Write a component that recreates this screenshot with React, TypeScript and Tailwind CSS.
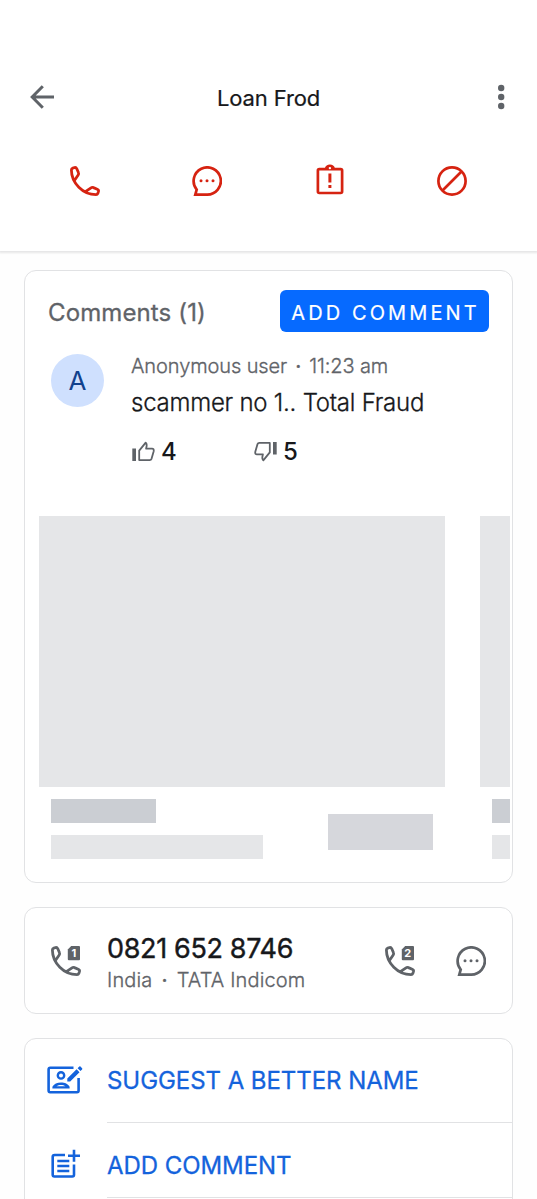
import type { ReactNode } from "react";

function PhoneIcon({ sim }: { sim?: string }) {
  return (
    <svg width="30" height="30" viewBox="0 0 30 30" className="block shrink-0 overflow-visible" fill="none" stroke="currentColor" strokeWidth="2.8" strokeLinejoin="round">
      <path d="M4.6 14.2L8.2 9Q9 7.8 8.4 6.5L6.8 2.8Q6 1.1 4.6 1.5L2.8 2.1Q1.4 2.6 1.4 4C1.4 17 13 28.6 26 28.6Q27.4 28.6 27.9 27.2L28.5 25.4Q28.9 24 27.2 23.2L23.5 21.6Q22.2 21 21 21.8L15.8 25.4" />
      {sim && (
        <>
          <path d="M20.2 0H28Q29 0 29 1V13.3Q29 14.3 28 14.3H17.8Q16.8 14.3 16.8 13.3V3.6Z" fill="currentColor" stroke="none" />
          <text x="22.8" y="11.4" textAnchor="middle" fontSize="11" className="fill-white font-bold" stroke="none">{sim}</text>
        </>
      )}
    </svg>
  );
}

function BubbleIcon() {
  return (
    <svg width="30" height="30" viewBox="0 0 30 30" className="block shrink-0" fill="none" stroke="currentColor" strokeWidth="2.7">
      <path d="M15 28.6H3.3L4.7 23.6A13.6 13.6 0 1 1 15 28.6Z" />
      <g fill="currentColor" stroke="none">
        <circle cx="9" cy="14.8" r="1.5" />
        <circle cx="15" cy="14.8" r="1.5" />
        <circle cx="21" cy="14.8" r="1.5" />
      </g>
    </svg>
  );
}

function ReportIcon() {
  return (
    <svg width="30" height="30" viewBox="0 0 30 30" className="block shrink-0 overflow-visible" fill="none" stroke="currentColor" strokeWidth="2.7">
      <rect x="2.9" y="3.1" width="24.2" height="23.9" rx="1.4" />
      <path d="M10.8 2.6A4.2 4.2 0 0 1 19 2.6Z" fill="currentColor" stroke="none" />
      <path d="M10.8 2.6A4.3 4.3 0 0 1 19 2.6" strokeWidth="2" />
      <circle cx="14.9" cy="2.1" r="1.2" fill="white" stroke="none" />
      <path d="M14.9 7.6V16.6M14.9 19V22" strokeWidth="3" />
    </svg>
  );
}

function BlockIcon() {
  return (
    <svg width="30" height="30" viewBox="0 0 30 30" className="block shrink-0" fill="none" stroke="currentColor" strokeWidth="2.7">
      <circle cx="15" cy="15" r="13.6" />
      <path d="M5.5 24.5L24.5 5.5" />
    </svg>
  );
}

function ThumbIcon({ down = false }: { down?: boolean }) {
  return (
    <svg width="23" height="21" viewBox="0 0 23 21" className={down ? "block shrink-0 rotate-180" : "block shrink-0"} fill="none" stroke="currentColor" strokeWidth="1.8" strokeLinejoin="round">
      <path d="M0.3 7.6H4V20H0.3Z" fill="currentColor" stroke="none" />
      <path d="M7.2 19.1V9.6L13.7 1.6Q15 3 14.7 4.8L14.1 7.6H20Q22.2 7.6 21.7 10.2L19.6 17.6Q19.1 19.1 17.6 19.1Z" />
    </svg>
  );
}

function SuggestIcon() {
  return (
    <svg width="36" height="28" viewBox="0 0 36 28" className="block shrink-0" fill="none" stroke="currentColor" strokeWidth="2.6">
      <path d="M26.5 1.8H3.2Q1.6 1.8 1.6 3.4V24.6Q1.6 26.2 3.2 26.2H30Q31.6 26.2 31.6 24.6V12" />
      <circle cx="14" cy="9.4" r="3.2" strokeWidth="2.4" />
      <path d="M5.4 22.6V20.8C8 15 20 15 22.6 20.8V22.6ZM9.5 20.3H18.5C16 18.5 12 18.5 9.5 20.3Z" fill="currentColor" fillRule="evenodd" stroke="none" />
      <path d="M20.3 12.6L29.6 3.3L32.5 6.2L23.2 15.5H20.3ZM30.6 2.3L32.3.6Q32.9.1 33.5.6L35.1 2.2Q35.6 2.8 35.1 3.4L33.5 5.1Z" fill="currentColor" stroke="none" />
    </svg>
  );
}

function PostAddIcon() {
  return (
    <svg width="30" height="30" viewBox="0 0 30 30" className="block shrink-0" fill="none" stroke="currentColor" strokeWidth="2.6">
      <path d="M14 6H3.6Q1.7 6 1.7 7.7V25.8Q1.7 27.5 3.4 27.5H21.3Q23 27.5 23 25.8V15.5" />
      <path d="M23 0.7V12.8M17 6.7H29" />
      <path d="M6.3 12H18.3M6.3 17H18.3M6.3 22H18.3" strokeWidth="2.4" />
    </svg>
  );
}

function Card({ className, children }: { className: string; children: ReactNode }) {
  return <section className={`mx-6 overflow-hidden rounded-xl border border-[#e1e2e4] bg-white ${className}`}>{children}</section>;
}

function Dot({ className }: { className: string }) {
  return <span className={`font-medium ${className}`}>·</span>;
}

function SkeletonItem() {
  return (
    <div className="w-[406px] shrink-0">
      <div className="h-[271px] bg-[#e5e6e8]" />
      <div className="flex items-start justify-between px-3 pt-3">
        <div>
          <div className="h-6 w-[105px] bg-[#cbced3]" />
          <div className="mt-3 h-6 w-[212px] bg-[#e5e6e8]" />
        </div>
        <div className="mt-[15px] h-9 w-[105px] bg-[#d6d7dc]" />
      </div>
    </div>
  );
}

export default function App() {
  return (
    <main className="h-[1199px] overflow-hidden bg-[#fefefe] font-['Inter','Liberation_Sans',sans-serif] whitespace-nowrap text-[#17181b]">
      <header className="h-[251px] bg-white pt-[75px] shadow-[0_1px_2px_1px_#e6e6e7]">
        <div className="flex h-11 items-center justify-between pr-8 pl-[30px]">
          <div className="w-10">
            <svg width="24" height="24" viewBox="0 0 24 24" fill="none" stroke="#5f6368" strokeWidth="3">
              <path d="M12.8 1.2L2.2 12L12.8 22.8M2.2 12H24" />
            </svg>
          </div>
          <h1 className="pt-0.5 pl-0.5 text-[22px] leading-7 tracking-[-0.12px] [-webkit-text-stroke:0.2px]">Loan Frod</h1>
          <div className="flex w-10 justify-end">
            <svg width="8" height="26" viewBox="0 0 8 26" fill="#5f6368">
              <circle cx="4.2" cy="4" r="3.2" />
              <circle cx="4.2" cy="13" r="3.2" />
              <circle cx="4.2" cy="22" r="3.2" />
            </svg>
          </div>
        </div>
        <nav className="mt-[47px] flex justify-between px-[70px] text-[#d62311]">
          <PhoneIcon />
          <BubbleIcon />
          <ReportIcon />
          <BlockIcon />
        </nav>
      </header>

      <Card className="mt-[19px] h-[613px]">
        <div className="mt-[19px] flex h-[42px] items-center justify-between px-[23px]">
          <h2 className="pt-[3px] text-[24px] tracking-[0.12px] text-[#5f6368] [-webkit-text-stroke:0.3px]">Comments (1)</h2>
          <button className="h-[42px] w-[209px] rounded-md bg-[#066aff] pt-[3px] pl-0.5 text-[20px] tracking-[3.1px] text-white [-webkit-text-stroke:0.2px]">ADD COMMENT</button>
        </div>
        <div className="mt-[22px] flex pl-[26px]">
          <div className="flex size-[53px] items-center justify-center rounded-full bg-[#cfe0fe] text-[26px] text-[#11418d]">A</div>
          <div className="ml-[27px]">
            <p className="text-[20px] leading-6 font-light tracking-[-0.1px] text-[#5f6368] [-webkit-text-stroke:0.3px]">Anonymous user<Dot className="mx-2" />11:23 am</p>
            <p className="mt-[9px] text-[24px] leading-8 font-light tracking-[-0.24px] [-webkit-text-stroke:0.3px]">scammer no 1.. Total Fraud</p>
            <div className="mt-[17px] ml-px flex h-8 items-center text-[24px] font-medium">
              <span className="-mt-0.5 text-[#5f6368]"><ThumbIcon /></span>
              <span className="ml-1.5 w-[93px]">4</span>
              <span className="-mt-0.5 text-[#5f6368]"><ThumbIcon down /></span>
              <span className="ml-1.5">5</span>
            </div>
          </div>
        </div>
        <div className="mt-12 mr-0.5 ml-3.5 flex gap-[35px] overflow-hidden">
          <SkeletonItem />
          <SkeletonItem />
        </div>
      </Card>

      <Card className="mt-6 flex h-[107px] items-center px-[26px] text-[#5f6368]">
        <PhoneIcon sim="1" />
        <div className="ml-[26px] flex-1 pt-1.5">
          <p className="text-[27px] leading-8 tracking-[-0.35px] text-[#17181b] [-webkit-text-stroke:0.4px]">0821 652 8746</p>
          <p className="mt-px text-[20px] leading-7 font-light tracking-[0.14px] [-webkit-text-stroke:0.3px]">India<Dot className="mx-[9px]" />TATA Indicom</p>
        </div>
        <div className="flex gap-[41px]">
          <PhoneIcon sim="2" />
          <BubbleIcon />
        </div>
      </Card>

      <Card className="mt-6 h-[260px] text-[24px] tracking-[-0.06px] text-[#1463dc] [-webkit-text-stroke:0.3px]">
        <div className="flex h-[84px]">
          <div className="w-[82px] pt-[27px] pl-[22px]"><SuggestIcon /></div>
          <div className="flex-1 border-b border-[#e1e2e4] pt-[26px] leading-8">SUGGEST A BETTER NAME</div>
        </div>
        <div className="flex h-[75px]">
          <div className="w-[82px] pt-[26px] pl-[26px]"><PostAddIcon /></div>
          <div className="flex-1 border-b border-[#e1e2e4] pt-[27px] leading-8">ADD COMMENT</div>
        </div>
      </Card>
    </main>
  );
}
